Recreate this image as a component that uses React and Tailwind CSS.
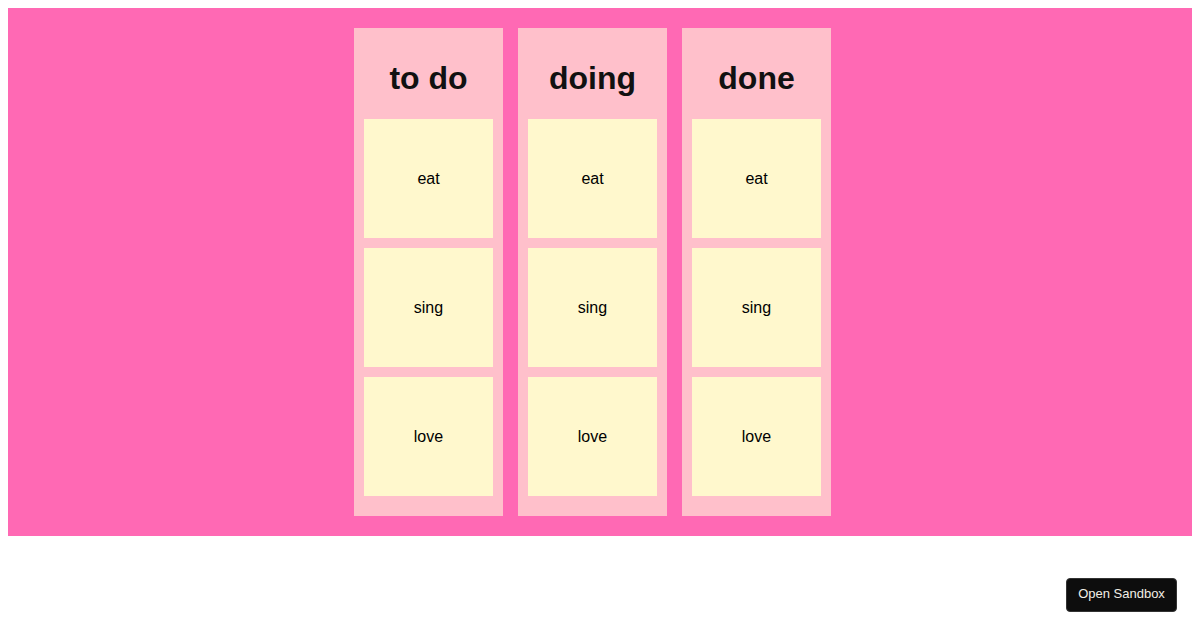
import React from "react";

const columns = ["to do", "doing", "done"];
const tasks = ["eat", "sing", "love"];

export default function App() {
  return (
    <div className="relative h-[630px] bg-white p-[8px] font-['Liberation_Sans',Arial,sans-serif] text-black">
      <div className="flex justify-center gap-[15px] bg-[#ff69b4] py-[20px] pr-[15px]">
        {columns.map(col => (
          <div key={col} className="w-[149px] bg-[#ffc0cb] px-[10px] pt-[10px] pb-[20px]">
            <div className="flex h-[81px] items-center justify-center pb-[1px]">
              <h1 className="text-[32px] font-bold leading-none text-[#111]">{col}</h1>
            </div>
            <div className="flex flex-col gap-[10px]">
              {tasks.map(t => (
                <div key={t} className="flex h-[119px] items-center justify-center bg-[#fff8cd] text-[16px]">
                  {t}
                </div>
              ))}
            </div>
          </div>
        ))}
      </div>
      <button className="absolute right-[23px] bottom-[18px] h-[34px] w-[111px] rounded-[4px] border border-[#333] bg-[#0d0d0d] pb-[2px] text-[13px] text-[#f2efe6]">
        Open Sandbox
      </button>
    </div>
  );
}
